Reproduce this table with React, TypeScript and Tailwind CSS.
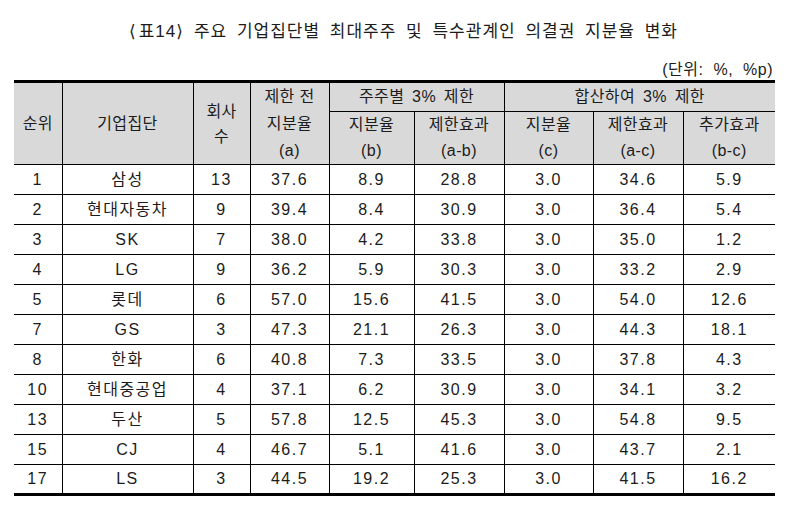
import React from "react";

const rows: string[][] = [
  ["1", "삼성", "13", "37.6", "8.9", "28.8", "3.0", "34.6", "5.9"],
  ["2", "현대자동차", "9", "39.4", "8.4", "30.9", "3.0", "36.4", "5.4"],
  ["3", "SK", "7", "38.0", "4.2", "33.8", "3.0", "35.0", "1.2"],
  ["4", "LG", "9", "36.2", "5.9", "30.3", "3.0", "33.2", "2.9"],
  ["5", "롯데", "6", "57.0", "15.6", "41.5", "3.0", "54.0", "12.6"],
  ["7", "GS", "3", "47.3", "21.1", "26.3", "3.0", "44.3", "18.1"],
  ["8", "한화", "6", "40.8", "7.3", "33.5", "3.0", "37.8", "4.3"],
  ["10", "현대중공업", "4", "37.1", "6.2", "30.9", "3.0", "34.1", "3.2"],
  ["13", "두산", "5", "57.8", "12.5", "45.3", "3.0", "54.8", "9.5"],
  ["15", "CJ", "4", "46.7", "5.1", "41.6", "3.0", "43.7", "2.1"],
  ["17", "LS", "3", "44.5", "19.2", "25.3", "3.0", "41.5", "16.2"],
];

const widths = [48, 131, 57, 79, 85, 90, 89, 90, 92];

const th =
  "font-normal border-t-[3px] border-t-black border-b border-b-black p-0";

export default function App() {
  return (
    <div
      className="w-[803px] h-[517px] bg-white text-[#1c1c1c]"
      style={{ fontFamily: '"Liberation Sans", "Noto Sans CJK KR", sans-serif' }}
    >
      <div className="h-[62px] flex items-center justify-center pl-[4px] pt-[2px] text-[17px] tracking-[1px] [word-spacing:4px]">
        <span className="font-['DejaVu_Sans'] mr-[2px]">⟨</span>
        <span>표14</span>
        <span className="font-['DejaVu_Sans']">⟩</span>
        <span className="w-[10px]" />
        주요 기업집단별 최대주주 및 특수관계인 의결권 지분율 변화
      </div>
      <div className="h-[15px] flex items-center justify-end pr-[30px] text-[16px] tracking-[0.5px] [word-spacing:5px]">
        (단위: %, %p)
      </div>
      <div className="pl-[14px] pt-[3px]">
        <table className="border-collapse table-fixed w-[761px] text-[16px] text-center">
          <colgroup>
            {widths.map((w, i) => (
              <col key={i} style={{ width: w }} />
            ))}
          </colgroup>
          <thead className="bg-[#d9d9d9] leading-[26px] tracking-[0.4px]">
            <tr className="h-[30px]">
              <th rowSpan={2} className={`${th} border-r border-r-black`}>
                순위
              </th>
              <th rowSpan={2} className={`${th} border-r border-r-black`}>
                기업집단
              </th>
              <th rowSpan={2} className={`${th} border-r border-r-black leading-[25px]`}>
                회사
                <br />수
              </th>
              <th rowSpan={2} className={`${th} border-r border-r-black leading-[27px]`}>
                제한 전
                <br />
                지분율
                <br />
                (a)
              </th>
              <th colSpan={2} className={`${th} border-r border-r-black [word-spacing:3px]`}>
                주주별 3% 제한
              </th>
              <th colSpan={3} className={`${th} [word-spacing:3px]`}>
                합산하여 3% 제한
              </th>
            </tr>
            <tr className="h-[53px]">
              {[
                ["지분율", "(b)"],
                ["제한효과", "(a-b)"],
                ["지분율", "(c)"],
                ["제한효과", "(a-c)"],
                ["추가효과", "(b-c)"],
              ].map(([a, b], i) => (
                <th
                  key={i}
                  className={`font-normal border-b border-b-black p-0 ${i < 4 ? "border-r border-r-black" : ""}`}
                >
                  {a}
                  <br />
                  {b}
                </th>
              ))}
            </tr>
          </thead>
          <tbody className="tracking-[1.5px]">
            {rows.map((r, ri) => (
              <tr key={ri} className="h-[30px]">
                {r.map((c, ci) => (
                  <td
                    key={ci}
                    className={`p-0 ${ci < 8 ? "border-r border-r-black" : ""} ${
                      ri === rows.length - 1 ? "border-b-[3px] border-b-black" : "border-b border-b-black"
                    }`}
                  >
                    {c}
                  </td>
                ))}
              </tr>
            ))}
          </tbody>
        </table>
      </div>
    </div>
  );
}
